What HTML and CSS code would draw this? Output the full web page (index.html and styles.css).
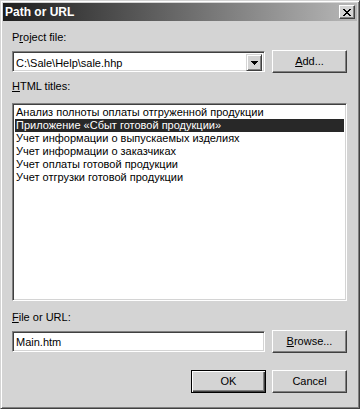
FILE: index.html
```html
<!DOCTYPE html>
<html lang="ru">
<head>
    <meta charset="UTF-8">
    <title>Path or URL</title>
    <link rel="stylesheet" href="styles.css">
</head>
<body>
    <div class="dialog">
        <div class="titlebar">
            <span class="title">Path or URL</span>
            <button class="close-btn" title="Close">
                <svg width="8" height="7" viewBox="0 0 8 7" shape-rendering="crispEdges">
                    <path d="M0 0h2v1H0z M6 0h2v1H6z M1 1h2v1H1z M5 1h2v1H5z M2 2h4v1H2z M3 3h2v1H3z M2 4h4v1H2z M1 5h2v1H1z M5 5h2v1H5z M0 6h2v1H0z M6 6h2v1H6z" fill="#000"/>
                </svg>
            </button>
        </div>

        <div class="dialog-body">
            <div class="label label-project">P<u>r</u>oject file:</div>
            <div class="field-row">
                <div class="combo">
                    <span class="combo-value">C:\Sale\Help\sale.hhp</span>
                    <span class="combo-drop">
                        <svg width="7" height="4" viewBox="0 0 7 4" shape-rendering="crispEdges">
                            <path d="M0 0h7v1H0z M1 1h5v1H1z M2 2h3v1H2z M3 3h1v1H3z" fill="#000"/>
                        </svg>
                    </span>
                </div>
                <button class="btn"><u>A</u>dd...</button>
            </div>

            <div class="label label-titles"><u>H</u>TML titles:</div>
            <ul class="title-list">
                <li>Анализ полноты оплаты отгруженной продукции</li>
                <li class="selected">Приложение «Сбыт готовой продукции»</li>
                <li>Учет информации о выпускаемых изделиях</li>
                <li>Учет информации о заказчиках</li>
                <li>Учет оплаты готовой продукции</li>
                <li>Учет отгрузки готовой продукции</li>
            </ul>

            <div class="label label-file"><u>F</u>ile or URL:</div>
            <div class="field-row">
                <div class="text-field">Main.htm</div>
                <button class="btn"><u>B</u>rowse...</button>
            </div>

            <div class="actions">
                <button class="btn btn-default">OK</button>
                <button class="btn">Cancel</button>
            </div>
        </div>
    </div>
</body>
</html>
```

FILE: styles.css
```css
* {
    margin: 0;
    padding: 0;
    box-sizing: border-box;
}

body {
    font-family: 'Liberation Sans', Arial, sans-serif;
    font-size: 11px;
    color: #000;
    background: #d4d4d4;
}

u {
    text-decoration: underline;
    text-underline-offset: 1px;
}

.dialog {
    width: 360px;
    height: 409px;
    background: #d4d4d4;
    border: 1px solid;
    border-color: #d4d4d4 #404040 #404040 #d4d4d4;
    box-shadow: inset 1px 1px #fff, inset -1px -1px #808080;
    padding: 2px;
    display: flex;
    flex-direction: column;
}

.titlebar {
    height: 18px;
    display: flex;
    align-items: flex-start;
    justify-content: space-between;
    background: linear-gradient(to right, #1e1e1e 0%, #5a5a5a 40%, #b8b8b8 100%);
}

.title {
    color: #fff;
    font-size: 12px;
    font-weight: bold;
    line-height: 18px;
    padding-left: 2px;
}

.close-btn {
    width: 16px;
    height: 14px;
    margin: 2px 2px 0 0;
    display: flex;
    align-items: center;
    justify-content: center;
    background: #d4d4d4;
    border: 1px solid;
    border-color: #fff #404040 #404040 #fff;
    box-shadow: inset -1px -1px #808080;
}

.dialog-body {
    flex: 1;
    padding: 9px 10px 0 9px;
}

.label {
    line-height: 13px;
}

.label-project {
    margin-top: 1px;
}

.label-titles {
    margin-top: 7px;
}

.label-file {
    margin-top: 10px;
}

.field-row {
    display: flex;
    align-items: center;
    gap: 7px;
    margin-top: 6px;
    height: 23px;
}

.combo,
.text-field,
.title-list {
    background: #fff;
    border: 1px solid;
    border-color: #808080 #fff #fff #808080;
    box-shadow: inset 1px 1px #404040, inset -1px -1px #d4d4d4;
}

.combo {
    width: 253px;
    height: 21px;
    padding: 2px;
    display: flex;
}

.combo-value {
    flex: 1;
    line-height: 17px;
    padding: 1px 0 0 1px;
}

.combo-drop {
    width: 16px;
    height: 17px;
    display: flex;
    align-items: center;
    justify-content: center;
    background: #d4d4d4;
    border: 1px solid;
    border-color: #d4d4d4 #404040 #404040 #d4d4d4;
    box-shadow: inset 1px 1px #fff, inset -1px -1px #808080;
}

.combo-drop svg {
    margin-top: 1px;
}

.text-field {
    width: 253px;
    height: 21px;
    padding: 2px 0 0 3px;
    line-height: 17px;
}

.btn {
    width: 75px;
    height: 23px;
    font: inherit;
    color: #000;
    background: #d4d4d4;
    border: 1px solid;
    border-color: #fff #404040 #404040 #fff;
    box-shadow: inset -1px -1px #808080;
    line-height: 19px;
    text-align: center;
}

.btn-default {
    border-color: #000;
    box-shadow: inset 1px 1px #fff, inset -1px -1px #404040, inset -2px -2px #808080;
}

.title-list {
    list-style: none;
    margin-top: 10px;
    height: 198px;
    padding: 2px;
}

.title-list li {
    line-height: 13px;
    padding-left: 1px;
    white-space: nowrap;
}

.title-list li.selected {
    background: #282828;
    color: #fff;
}

.actions {
    display: flex;
    justify-content: flex-end;
    gap: 6px;
    margin-top: 17px;
}
```
